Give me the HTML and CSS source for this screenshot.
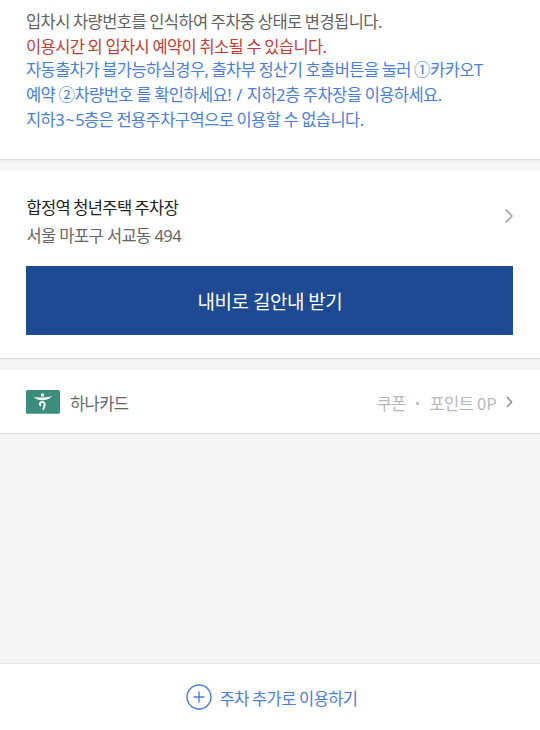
FILE: index.html
```html
<!DOCTYPE html>
<html lang="ko">
<head>
<meta charset="utf-8">
<title>주차 이용</title>
<link rel="stylesheet" href="styles.css">
</head>
<body>
<main class="screen">
  <section class="card notice">
    <p class="line status">입차시 차량번호를 인식하여 주차중 상태로 변경됩니다.</p>
    <p class="line warning">이용시간 외 입차시 예약이 취소될 수 있습니다.</p>
    <div class="guide">
      <p class="line guide-a">자동출차가 불가능하실경우, 출차부 정산기 호출버튼을 눌러 ①카카오T</p>
      <p class="line guide-b">예약 ②차량번호 를 확인하세요<span class="mark">!</span> <span class="mark">/</span> 지하2층 주차장을 이용하세요.</p>
      <p class="line guide-c">지하<span class="tilde">3~</span>5층은 전용주차구역으로 이용할 수 없습니다.</p>
    </div>
  </section>
  <section class="card place">
    <div class="place-row">
      <div>
        <h2 class="place-name">합정역 청년주택 주차장</h2>
        <p class="place-address">서울 마포구 서교동 494</p>
      </div>
      <svg class="place-arrow" width="10" height="16" viewBox="0 0 10 16"><path d="M1.5 1.2 8 8 1.5 14.8"/></svg>
    </div>
    <button class="navigate">내비로 길안내 받기</button>
  </section>
  <section class="card payment">
    <svg class="card-logo" width="34" height="24" viewBox="0 0 34 24">
      <rect width="34" height="23.7" rx="1.5" fill="#3d8d7c"/>
      <circle cx="16.5" cy="5" r="1.7" fill="#fff"/>
      <path fill="#fff" d="M8 6.9C12 7.9 21 8 26 6.1C24.4 8.6 21.7 9.6 18.5 10.1C14.4 10.4 10 9.7 8 6.9Z"/>
      <path fill="none" stroke="#fff" stroke-width="1.9" d="M14.7 16C13.2 14 14 11.9 16.2 11.9C19.5 11.9 19.2 16.3 17 19.8"/>
    </svg>
    <span class="card-name">하나카드</span>
    <span class="benefit coupon">쿠폰</span>
    <span class="dot"></span>
    <span class="benefit points">포인트 <span class="amount">0P</span></span>
    <svg class="pay-arrow" width="7" height="12" viewBox="0 0 7 12"><path d="M1 1 5.6 6 1 11"/></svg>
  </section>
  <footer class="extend">
    <svg class="plus" width="26" height="26" viewBox="0 0 26 26"><circle cx="13" cy="13" r="12"/><path d="M13 7.6V18.4M7.6 13H18.4"/></svg>
    <span class="extend-label">주차 추가로 이용하기</span>
  </footer>
</main>
</body>
</html>
```
FILE: styles.css
```css
* { box-sizing: border-box; }
body, p, h2 { margin: 0; }
body {
  background: #f4f5f7;
  font-family: "Noto Sans", "Noto Sans CJK KR", sans-serif;
  font-size: 16.5px;
  letter-spacing: -0.57px;
}
.screen {
  height: 730px;
  display: flex;
  flex-direction: column;
  overflow: hidden;
}
.card {
  background: #fff;
  border-bottom: 1px solid #dcdee0;
  box-shadow: 0 1px 0 #eeeff1;
  flex: none;
}
.notice { height: 160px; padding: 9px 26px 0; }
.line { height: 25px; line-height: 25px; white-space: nowrap; word-spacing: -0.55px; }
.status { color: #626262; }
.warning { color: #c03e38; }
.guide { margin-top: -2px; color: #4a7edb; }
.guide-b { word-spacing: -0.4px; }
.mark { letter-spacing: 1.2px; }
.tilde { letter-spacing: 0.5px; }
.place { margin-top: 11px; height: 188px; padding: 24px 26.5px 0 26.4px; }
.place-row { display: flex; justify-content: space-between; }
.place-name { height: 28px; line-height: 26px; font-size: 16.5px; font-weight: 400; color: #222; word-spacing: -0.8px; }
.place-address { height: 28px; line-height: 26px; color: #666; }
.place-arrow { margin-top: 13px; fill: none; stroke: #999; stroke-width: 1.4; }
.navigate {
  display: block;
  width: 487.1px;
  height: 68.5px;
  margin-top: 15px;
  padding: 2px 0 0;
  border: 0;
  background: #1d4a93;
  color: #fff;
  font: inherit;
  font-size: 19px;
  letter-spacing: -0.5px;
}
.payment {
  margin-top: 11px;
  height: 64px;
  padding: 0 27.4px 0 26px;
  display: flex;
  align-items: center;
}
.card-logo { display: block; }
.card-name { margin-left: 10px; color: #666; position: relative; top: 1px; }
.benefit { color: #b7b8ba; position: relative; top: 1px; }
.amount { font-family: "Noto Sans CJK KR", sans-serif; letter-spacing: 0; }
.coupon { margin-left: auto; }
.dot { width: 3px; height: 3px; margin: 3px 10.5px 0 10px; border-radius: 50%; background: #b0b1b3; }
.pay-arrow { margin-left: 9px; fill: none; stroke: #888; stroke-width: 1.4; }
.extend {
  margin-top: auto;
  height: 67px;
  flex: none;
  padding-left: 3px;
  border-top: 1px solid #e4e5e7;
  background: #fff;
  color: #4a7edb;
  display: flex;
  justify-content: center;
  align-items: center;
}
.plus { fill: none; stroke: #4a7edb; stroke-width: 1.4; }
.extend-label { margin: 2px 0 0 8px; word-spacing: -0.5px; }
```
